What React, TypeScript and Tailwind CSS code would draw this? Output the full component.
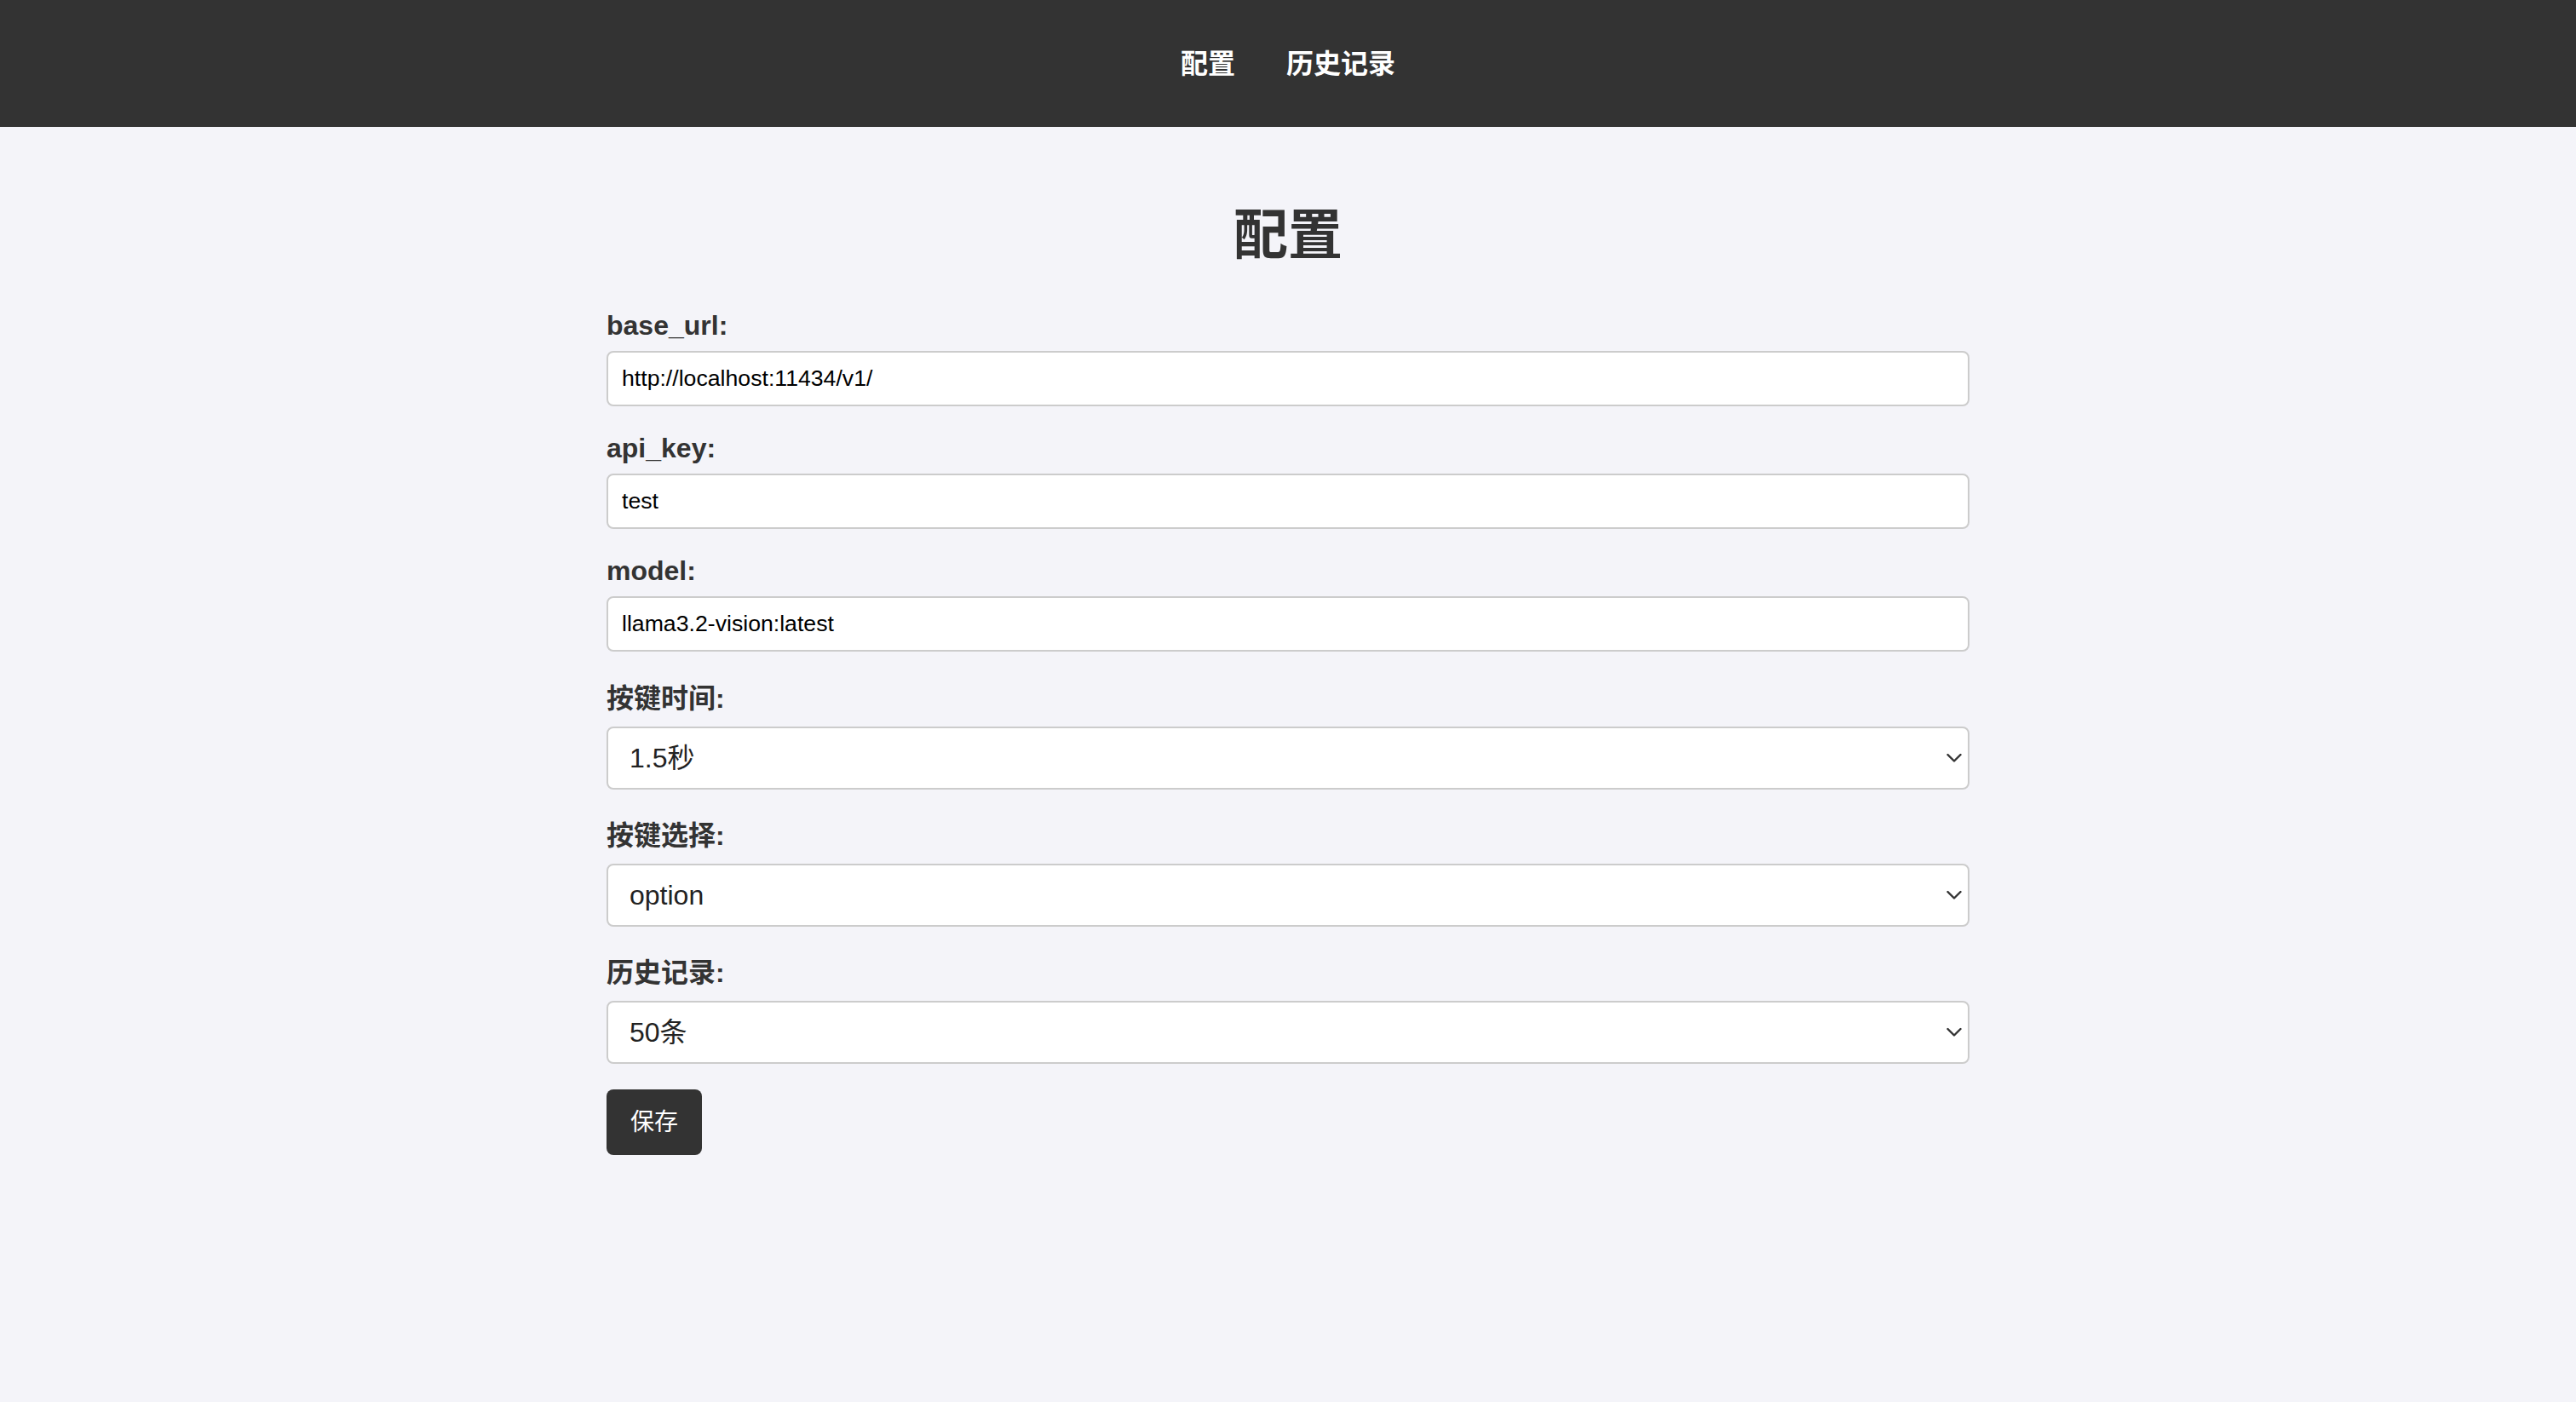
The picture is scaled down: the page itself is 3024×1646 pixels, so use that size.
import React, { useState } from "react";

const FONT = "font-['Liberation_Sans','Noto_Sans_CJK_SC',sans-serif]";

function Chevron() {
  return (
    <svg
      className="pointer-events-none absolute right-[9px] top-1/2 -translate-y-1/2"
      width="18"
      height="11"
      viewBox="0 0 18 11"
      fill="none"
    >
      <polyline
        points="1.5,1.5 9,9 16.5,1.5"
        stroke="#333"
        strokeWidth="2.4"
        strokeLinecap="round"
        strokeLinejoin="round"
      />
    </svg>
  );
}

function TextField({ label, value }: { label: string; value: string }) {
  const [v, setV] = useState(value);
  return (
    <div className="flex flex-col">
      <label className="mb-[11px] text-[32px] font-bold leading-[37px] text-[#333]">
        {label}
      </label>
      <input
        type="text"
        value={v}
        onChange={(e) => setV(e.target.value)}
        className="mb-[31px] h-[65px] w-full rounded-[8px] border-2 border-[#ccc] bg-white px-[16px] text-[26.67px] text-black outline-none"
      />
    </div>
  );
}

function SelectField({
  label,
  value,
  options,
}: {
  label: string;
  value: string;
  options: string[];
}) {
  const [v, setV] = useState(value);
  return (
    <div className="flex flex-col pt-[6px]">
      <label className="mb-[14px] text-[32px] font-bold leading-[37px] text-[#333]">
        {label}
      </label>
      <div className="relative mb-[30px]">
        <select
          value={v}
          onChange={(e) => setV(e.target.value)}
          className="h-[74px] w-full appearance-none rounded-[8px] border-2 border-[#ccc] bg-white pl-[25px] text-[32px] text-[#222] outline-none"
        >
          {options.map((o) => (
            <option key={o} value={o}>
              {o}
            </option>
          ))}
        </select>
        <Chevron />
      </div>
    </div>
  );
}

export default function App() {
  return (
    <div className={`min-h-screen bg-[#f4f4f9] ${FONT}`}>
      {/* header nav */}
      <header className="flex h-[149px] items-center justify-center bg-[#333]">
        <a href="#" className="mx-[30px] text-[32px] font-bold leading-[40px] text-white">
          配置
        </a>
        <a href="#" className="mx-[30px] text-[32px] font-bold leading-[40px] text-white">
          历史记录
        </a>
      </header>

      <main className="mx-auto w-[1600px] pt-[95px]">
        <h1 className="mb-[56px] text-center text-[64px] font-bold leading-[64px] text-[#333]">
          配置
        </h1>

        <form onSubmit={(e) => e.preventDefault()} className="flex flex-col">
          <TextField label="base_url:" value="http://localhost:11434/v1/" />
          <TextField label="api_key:" value="test" />
          <TextField label="model:" value="llama3.2-vision:latest" />

          <SelectField
            label="按键时间:"
            value="1.5秒"
            options={["0.5秒", "1秒", "1.5秒", "2秒", "3秒"]}
          />
          <SelectField
            label="按键选择:"
            value="option"
            options={["option", "command", "control", "shift"]}
          />
          <SelectField
            label="历史记录:"
            value="50条"
            options={["10条", "20条", "50条", "100条"]}
          />

          <div>
            <button
              type="submit"
              className="flex h-[77px] w-[112px] items-center justify-center rounded-[8px] bg-[#333] text-[28px] text-white"
            >
              保存
            </button>
          </div>
        </form>
      </main>
    </div>
  );
}
